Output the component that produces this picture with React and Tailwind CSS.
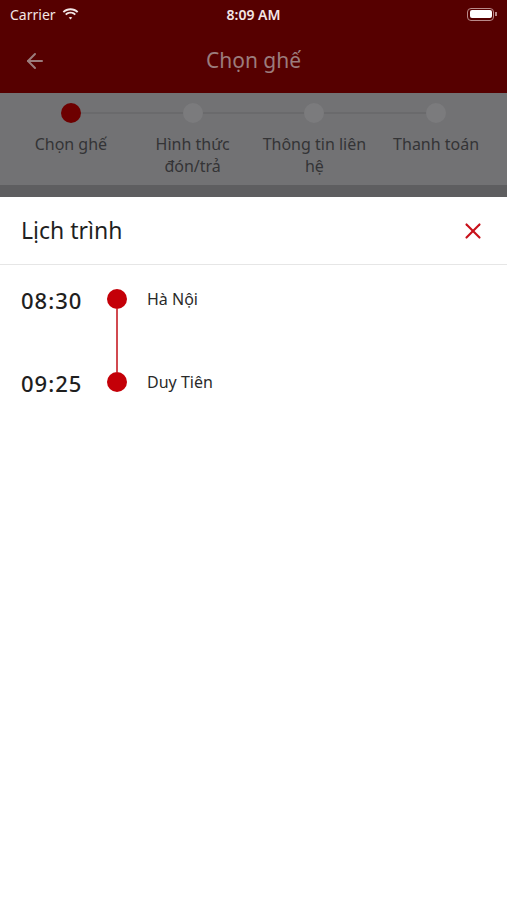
import React from "react";
import { ArrowLeft, X } from "lucide-react";

const steps = [
  { label: "Chọn ghế", active: true },
  { label: "Hình thức đón/trả" },
  { label: "Thông tin liên hệ" },
  { label: "Thanh toán" },
];

const stops = [
  { time: "08:30", place: "Hà Nội" },
  { time: "09:25", place: "Duy Tiên" },
];

const StatusBar = () => (
  <div className="h-[28px] flex items-center justify-between px-[10px] text-[#f3e6e6]">
    <div className="flex items-center gap-[6px] w-[120px]">
      <span className="text-[14px]">Carrier</span>
      <svg width="17" height="12" viewBox="0 0 17 12" fill="currentColor">
        <path d="M8.5 2.2c2.5 0 4.8 1 6.5 2.6l1.3-1.3C14.2 1.5 11.5.3 8.5.3S2.8 1.5.7 3.5L2 4.8c1.7-1.6 4-2.6 6.5-2.6z" />
        <path d="M8.5 5.6c1.6 0 3 .6 4.1 1.6l1.3-1.3c-1.4-1.3-3.3-2.2-5.4-2.2S4.5 4.6 3.1 5.9l1.3 1.3c1.1-1 2.5-1.6 4.1-1.6z" />
        <path d="M8.5 8.9c.7 0 1.3.3 1.8.7l-1.8 1.9-1.8-1.9c.5-.4 1.1-.7 1.8-.7z" />
      </svg>
    </div>
    <span className="text-[14px] font-semibold">8:09 AM</span>
    <div className="w-[120px] flex justify-end items-center">
      <div className="w-[27px] h-[13px] rounded-[4px] border border-[#b98a8a] p-[1.5px]">
        <div className="w-full h-full bg-white rounded-[2px]" />
      </div>
      <div className="w-[1.5px] h-[4px] bg-[#b98a8a] ml-[1px]" />
    </div>
  </div>
);

export default function App() {
  return (
    <div className="w-[507px] h-[900px] bg-white flex flex-col overflow-hidden" style={{ fontFamily: "'Noto Sans', 'Open Sans', sans-serif" }}>
      <div className="bg-[#560000]">
        <StatusBar />
        <div className="h-[65px] flex items-center px-[23px] relative">
          <ArrowLeft size={24} strokeWidth={2} className="text-[#9b7c7c]" />
          <div className="absolute left-0 right-0 text-center text-[21px] text-[#9b7c7c] pointer-events-none">
            Chọn ghế
          </div>
        </div>
      </div>

      <div className="bg-[#727274]">
        <div className="relative pt-[10px] pb-[8px] px-[10px]">
          <div className="absolute top-[19px] left-[71px] right-[71px] h-[2px] bg-[#6a6a6c]" />
          <div className="grid grid-cols-4 relative">
            {steps.map((s) => (
              <div key={s.label} className="flex flex-col items-center">
                <div className={`w-[20px] h-[20px] rounded-full ${s.active ? "bg-[#6d0000]" : "bg-[#7b7b7d]"}`} />
                <div className="mt-[10px] text-[16px] leading-[22px] text-center text-[#343436] px-[6px]">
                  {s.label}
                </div>
              </div>
            ))}
          </div>
        </div>
        <div className="h-[12px] bg-[#5e5e60]" />
      </div>

      <div className="flex-1 bg-white">
        <div className="h-[68px] flex items-center justify-between pl-[21px] pr-[21px] border-b border-[#e6e6e6]">
          <span className="text-[23px] text-[#1f1f1f]">Lịch trình</span>
          <X size={26} strokeWidth={2} className="text-[#c8101a]" />
        </div>
        <div className="pl-[21px] pt-[21px]">
          {stops.map((s, i) => (
            <div key={s.time} className="flex items-start h-[83px]">
              <span className="w-[86px] text-[22px] font-medium tracking-[1px] text-[#1f1f1f] leading-[28px]">{s.time}</span>
              <div className="w-[20px] flex flex-col items-center relative">
                <div className="mt-[3px] w-[20px] h-[20px] rounded-full bg-[#c40008]" />
                {i < stops.length - 1 && <div className="w-[2px] h-[63px] bg-[#d14a50]" />}
              </div>
              <span className="ml-[20px] text-[16px] text-[#2a2a2a] leading-[26px]">{s.place}</span>
            </div>
          ))}
        </div>
      </div>
    </div>
  );
}
